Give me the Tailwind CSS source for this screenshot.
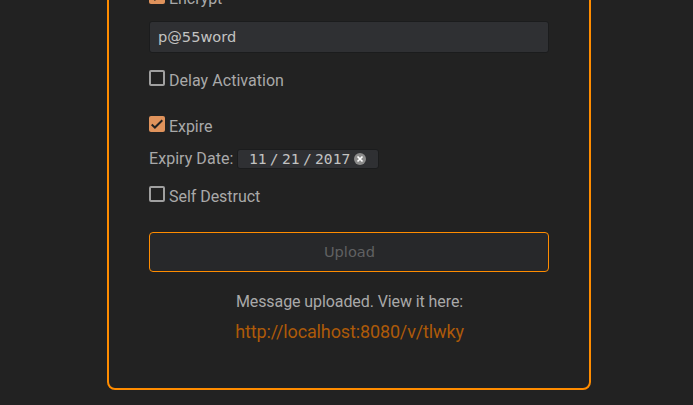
<!DOCTYPE html>
<html lang="en">
<head>
<meta charset="utf-8">
<title>Upload</title>
<script src="https://cdn.jsdelivr.net/npm/@tailwindcss/browser@4"></script>
</head>
<body class="h-screen overflow-hidden bg-[#222222] font-['Roboto',sans-serif] text-base text-[#a9a9a9]">
<main class="ml-[107px] -mt-8 flex h-[422px] w-[484px] flex-col rounded-lg border-2 border-[#ff8c00] px-10 pt-[17px]">
  <label class="flex h-6 gap-1">
    <svg class="mt-px size-4" viewBox="0 0 16 16"><rect width="16" height="16" rx="2" fill="#e0935c"/><path d="M2.7 8.5l3.2 3L13.3 4.3" fill="none" stroke="#222" stroke-width="2"/></svg>
    <span class="tracking-[-0.05px]">Encrypt</span>
  </label>
  <input type="text" value="p@55word" class="mt-[10px] h-8 w-full rounded-[3px] border border-[#1b1c1d] bg-[#2f3033] px-2 pb-0.5 font-['DejaVu_Sans',sans-serif] text-[14.6px] text-[#c3c3c2] outline-none">
  <label class="mt-4 flex h-6 gap-1">
    <span class="mt-px size-4 rounded-[2px] border-2 border-[#a0a0a0]"></span>
    <span class="tracking-[0.04px]">Delay Activation</span>
  </label>
  <label class="mt-[22px] flex h-6 gap-1">
    <svg class="mt-px size-4" viewBox="0 0 16 16"><rect width="16" height="16" rx="2" fill="#e0935c"/><path d="M2.7 8.5l3.2 3L13.3 4.3" fill="none" stroke="#222" stroke-width="2"/></svg>
    <span class="tracking-[-0.05px]">Expire</span>
  </label>
  <div class="mt-2 flex h-6 items-center gap-1">
    <span class="tracking-[0.05px]">Expiry Date:</span>
    <div class="flex h-5 w-[142px] items-center rounded-[3px] border border-[#1b1c1d] bg-[#2f3033] pl-[10.5px] font-['DejaVu_Sans_Mono',monospace] text-[14.6px] text-[#c3c3c2]">
      <span>11</span><span class="w-[15.5px] text-center">/</span><span>21</span><span class="w-[15.5px] text-center">/</span><span>2017</span>
      <svg class="ml-[3.5px] size-3" viewBox="0 0 12 12"><circle cx="6" cy="6" r="6" fill="#8b8b8b"/><path d="M3.5 3.5l5 5M8.5 3.5l-5 5" stroke="#fff" stroke-width="1.7"/></svg>
    </div>
  </div>
  <label class="mt-[14px] flex h-6 gap-1">
    <span class="mt-px size-4 rounded-[2px] border-2 border-[#a0a0a0]"></span>
    <span class="tracking-[-0.04px]">Self Destruct</span>
  </label>
  <button class="mt-[23px] h-10 w-full shrink-0 rounded border border-[#ff8c00] bg-[#27282a] pl-px font-['DejaVu_Sans',sans-serif] text-[14.6px] text-[#606162]">Upload</button>
  <p class="mt-[18px] pl-px text-center leading-6 tracking-[-0.09px]">Message uploaded. View it here:</p>
  <a class="mt-1.5 pl-px text-center text-lg leading-6 tracking-[-0.13px] text-[#ad5a09]">http://localhost:8080/v/tlwky</a>
</main>
</body>
</html>
